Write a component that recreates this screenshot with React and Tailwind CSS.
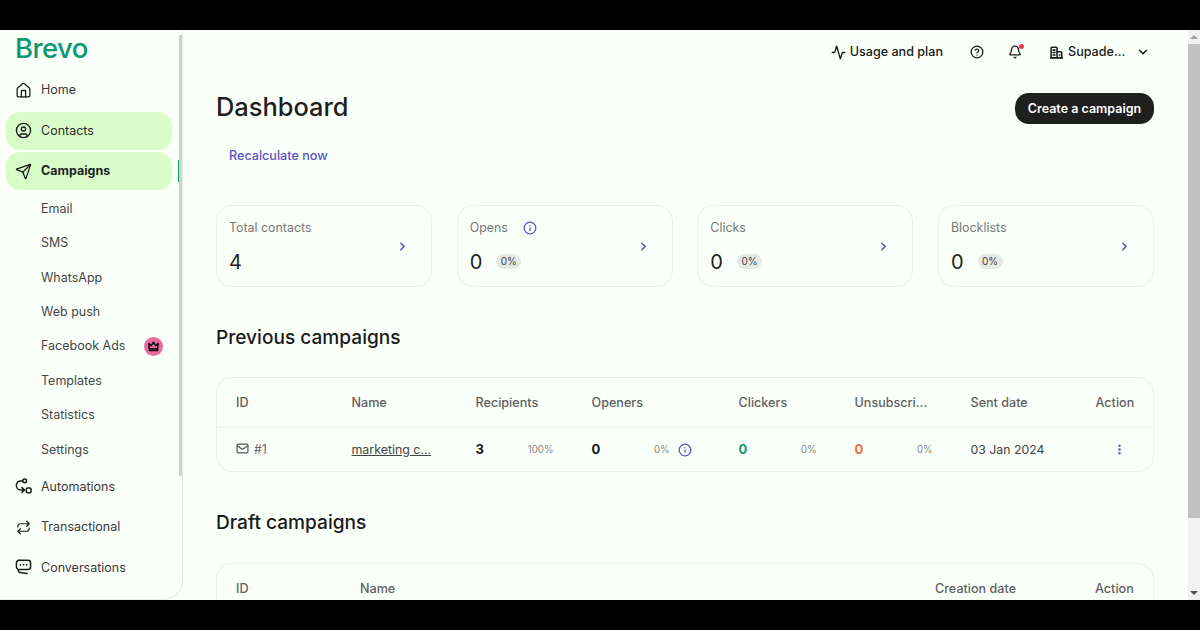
import React from "react";
import { House, CircleUser, Send, Activity, CircleHelp, Bell, ChevronDown, ChevronRight, Info, Mail, EllipsisVertical, Repeat } from "lucide-react";

const font = { fontFamily: "Inter, sans-serif" };

const Automations = () => (
  <svg width="17" height="17" viewBox="0 0 18 18" fill="none" stroke="#1a1a1a" strokeWidth="1.6" strokeLinecap="round" strokeLinejoin="round">
    <circle cx="10.2" cy="3" r="2" />
    <rect x="12" y="10.6" width="5" height="5" rx="1.2" />
    <path d="M8.1 3.2H6A4.6 4.6 0 0 0 1.4 7.8c0 2.6 2 4.9 4.6 4.9h4" />
    <path d="M7.4 10.2l2.6 2.5-2.6 2.5" />
  </svg>
);

const Chat = () => (
  <svg width="17" height="17" viewBox="0 0 18 18" fill="none" stroke="#1a1a1a" strokeWidth="1.6" strokeLinecap="round" strokeLinejoin="round">
    <path d="M4.3 1.4h9.4a2.8 2.8 0 0 1 2.8 2.8v4a2.8 2.8 0 0 1-2.8 2.8H5.2c-1.2 0-1.9.7-1.9 1.5 0 .9.8 1.5 2 1.7l7.4 1.2" />
    <path d="M4.3 1.4a2.8 2.8 0 0 0-2.8 2.8v4c0 1.2.6 2.2 1.9 2.8" />
    <path d="M5.6 6.2h.01M9 6.2h.01M12.4 6.2h.01" strokeWidth="1.9" />
  </svg>
);

const CrownIcon = () => (
  <svg width="13" height="13" viewBox="0 0 14 14" fill="none" stroke="#111" strokeWidth="1.7" strokeLinejoin="round" strokeLinecap="round">
    <path d="M2 3.8l2.6 2.2L7 2.4l2.4 3.6L12 3.8l-.6 7.4H2.6z" />
    <path d="M3 9.4h8" />
  </svg>
);

const BuildingIcon = () => (
  <svg width="13" height="13" viewBox="0 0 14 14" fill="none" stroke="#1a1a1a" strokeWidth="1.7" strokeLinejoin="round" strokeLinecap="round" className="ml-[28px] mr-[5px]">
    <path d="M1.2 12.8V2.4a1 1 0 0 1 1-1h4.4a1 1 0 0 1 1 1v10.4" />
    <path d="M7.6 6.2h3.8a1.2 1.2 0 0 1 1.2 1.2v5.4" />
    <path d="M.6 12.8h12.8M3.4 4.4h2M3.4 7h2M3.4 9.6h2M10 9.6h.5" />
  </svg>
);

const Top = ({ icon, label, active, bold }) => (
  <div className={`flex items-center h-[38px] mb-[2.5px] ml-[6px] w-[166px] rounded-[14px] pl-[9px] gap-[9px] ${active ? "bg-[#d8fdc9]" : ""}`}>
    <span className="w-[17px] flex justify-center shrink-0">{icon}</span>
    <span className={`text-[12.5px] pt-[1px] ${bold ? "font-bold text-[#1f1f1f]" : active ? "text-[#2c2c2c]" : "text-[#3a3a3a]"}`}>{label}</span>
  </div>
);

const Sub = ({ label, badge }) => (
  <div className="flex items-center h-[34.4px] pl-[41px] w-[163px] justify-between">
    <span className="text-[12.5px] pt-[1px] text-[#474747]">{label}</span>
    {badge && (
      <span className="w-[19px] h-[19px] rounded-full bg-[#ec6a9c] flex items-center justify-center">
        <CrownIcon />
      </span>
    )}
  </div>
);

const Card = ({ title, value, pct, info }) => (
  <div className="h-[82px] rounded-[16px] border border-[#eceeec] pl-[12px] pr-[22px] flex items-center justify-between">
    <div className="flex flex-col pt-[3px]">
      <div className="flex items-center gap-[15px] h-[18px] text-[12.4px] text-[#787878]">
        <span>{title}</span>
        {info && <Info size={14} strokeWidth={2.2} color="#5b52c6" className="-mt-[1px]" />}
      </div>
      <div className="flex items-center gap-[14px] mt-[10px] h-[28px]">
        <span className="text-[20px] text-[#1f1f1f]">{value}</span>
        {pct && <span className="h-[15px] w-[25px] rounded-full bg-[#e6e8e6] text-[10px] text-[#444] flex items-center justify-center">{pct}</span>}
      </div>
    </div>
    <ChevronRight size={13} strokeWidth={3} color="#5b52c6" className="mt-[1px]" />
  </div>
);

const Th = ({ children }) => <span className="text-[12.6px] pt-[1px] font-medium text-[#5f5f5f]">{children}</span>;

const Stat = ({ n, pct, color = "text-[#141414]" }) => (
  <div className="flex items-center justify-between pr-[38px]">
    <span className={`text-[13px] font-bold ${color}`}>{n}</span>
    <span className="text-[9.7px] pt-[1px] text-[#868686]">{pct}</span>
  </div>
);

export default function App() {
  return (
    <div className="w-[1200px] h-[630px] bg-black py-[30px] overflow-hidden" style={font}>
      <div className="h-[570px] flex bg-[#fbfffa] overflow-hidden">
        <aside className="w-[183px] h-[570px] shrink-0 relative rounded-br-[20px] border-r border-b border-[#e6e9e6] overflow-hidden flex">
          <div className="w-[179px] shrink-0">
            <div className="h-[41px] pl-[15px] flex items-start">
              <span className="text-[27.5px] font-medium leading-[36px] text-[#0b996e] tracking-[-0.6px]">Brevo</span>
            </div>
            <Top icon={<House size={17} strokeWidth={1.8} color="#1a1a1a" />} label="Home" />
            <Top icon={<CircleUser size={17} strokeWidth={1.9} color="#1a1a1a" />} label="Contacts" active />
            <Top icon={<Send size={17} strokeWidth={1.8} color="#1a1a1a" />} label="Campaigns" active bold />
            <div className="-mt-[1px] h-[275.2px]">
              <Sub label="Email" />
              <Sub label="SMS" />
              <Sub label="WhatsApp" />
              <Sub label="Web push" />
              <Sub label="Facebook Ads" badge />
              <Sub label="Templates" />
              <Sub label="Statistics" />
              <Sub label="Settings" />
            </div>
            <div className="mt-[1px]">
              <Top icon={<Automations />} label="Automations" />
              <Top icon={<Repeat size={15} strokeWidth={1.9} color="#1a1a1a" />} label="Transactional" />
              <Top icon={<Chat />} label="Conversations" />
            </div>
          </div>
          <div className="w-[4px] pt-[5px]">
            <div className="w-[3px] h-[441px] bg-[#cfd1cf]" />
          </div>
          <div className="absolute left-[178px] top-[130px] w-[1px] h-[22px] bg-[#0b996e]" />
        </aside>

        <main className="flex-1 min-w-0 pl-[33px] pr-[34px]">
          <div className="h-[44px] flex items-center justify-end pr-[4px] text-[#1a1a1a]">
            <Activity size={15} strokeWidth={2.2} className="mr-[4px]" />
            <span className="text-[12.6px] pt-[1px] font-medium">Usage and plan</span>
            <CircleHelp size={14} strokeWidth={2.2} className="ml-[27px]" />
            <span className="relative ml-[24px]">
              <Bell size={14} strokeWidth={2.2} />
              <span className="absolute -top-[1px] right-[-2px] w-[5px] h-[5px] rounded-full bg-[#f0394f]" />
            </span>
            <BuildingIcon />
            <span className="text-[12.6px] pt-[1px] font-medium w-[68px]">Supade...</span>
            <ChevronDown size={14} strokeWidth={2.6} />
          </div>

          <div className="flex items-center justify-between h-[31px] mt-[19px]">
            <h1 className="text-[25.4px] font-medium text-[#1f1f1f] -mt-[2px]">Dashboard</h1>
            <button className="h-[31px] w-[139px] rounded-[14px] bg-[#1f1f1f] text-white text-[12.5px] font-semibold pt-[1px]">Create a campaign</button>
          </div>
          <div className="h-[18px] mt-[22px] pl-[13px] pt-[1px] text-[12.6px] leading-[18px] font-medium text-[#5b52c6]">Recalculate now</div>

          <div className="grid grid-cols-4 gap-[24.67px] mt-[41px]">
            <Card title="Total contacts" value="4" />
            <Card title="Opens" value="0" pct="0%" info />
            <Card title="Clicks" value="0" pct="0%" />
            <Card title="Blocklists" value="0" pct="0%" />
          </div>

          <h2 className="text-[19.1px] font-medium leading-[28px] text-[#1a1a1a] mt-[36px]">Previous campaigns</h2>

          <div className="mt-[26px] h-[95px] rounded-[16px] border border-[#eceeec]">
            <div className="h-[50px] border-b border-[#eceeec] pl-[19px] grid grid-cols-[115.5px_124px_116px_147px_116px_116px_125px_1fr] items-center">
              <Th>ID</Th><Th>Name</Th><Th>Recipients</Th><Th>Openers</Th><Th>Clickers</Th><Th>Unsubscri...</Th><Th>Sent date</Th><Th>Action</Th>
            </div>
            <div className="h-[43px] pl-[19px] grid grid-cols-[115.5px_124px_116px_147px_116px_116px_125px_1fr] items-center">
              <div className="flex items-center gap-[5px] text-[12.4px] text-[#6b6b6b]">
                <Mail size={13} strokeWidth={2.2} color="#555" className="-mt-[1px]" />
                <span className="pt-[1px]">#1</span>
              </div>
              <span className="text-[12.4px] pt-[1px] text-[#444] underline">marketing c...</span>
              <Stat n="3" pct="100%" />
              <div className="flex items-center">
                <div className="flex items-center justify-between w-[78px]">
                  <span className="text-[13px] font-bold text-[#141414]">0</span>
                  <span className="text-[9.7px] pt-[1px] text-[#868686]">0%</span>
                </div>
                <Info size={14} strokeWidth={2.2} color="#5b52c6" className="ml-[8px]" />
              </div>
              <Stat n="0" pct="0%" color="text-[#0b996e]" />
              <Stat n="0" pct="0%" color="text-[#ef6a45]" />
              <span className="text-[12.3px] pt-[1px] text-[#444]">03 Jan 2024</span>
              <EllipsisVertical size={13} strokeWidth={2.6} color="#5b52c6" className="ml-[17px]" />
            </div>
          </div>

          <h2 className="text-[19.1px] font-medium leading-[28px] text-[#1a1a1a] mt-[36px]">Draft campaigns</h2>

          <div className="mt-[27px] h-[60px] rounded-t-[16px] border border-[#eceeec] pl-[19px] grid grid-cols-[124px_575px_160px_1fr] items-center pb-[8px]">
            <Th>ID</Th><Th>Name</Th><Th>Creation date</Th><Th>Action</Th>
          </div>
        </main>

        <div className="w-[12px] shrink-0 bg-[#f1f1f1] flex flex-col items-center">
          <div className="h-[14px] flex items-center justify-center">
            <span className="w-0 h-0 border-x-[4px] border-x-transparent border-b-[4px] border-b-[#a3a3a3]" />
          </div>
          <div className="w-full h-[474px] bg-[#c1c1c1]" />
          <div className="mt-auto h-[14px] flex items-center justify-center">
            <span className="w-0 h-0 border-x-[4px] border-x-transparent border-t-[4px] border-t-[#505050]" />
          </div>
        </div>
      </div>
    </div>
  );
}
